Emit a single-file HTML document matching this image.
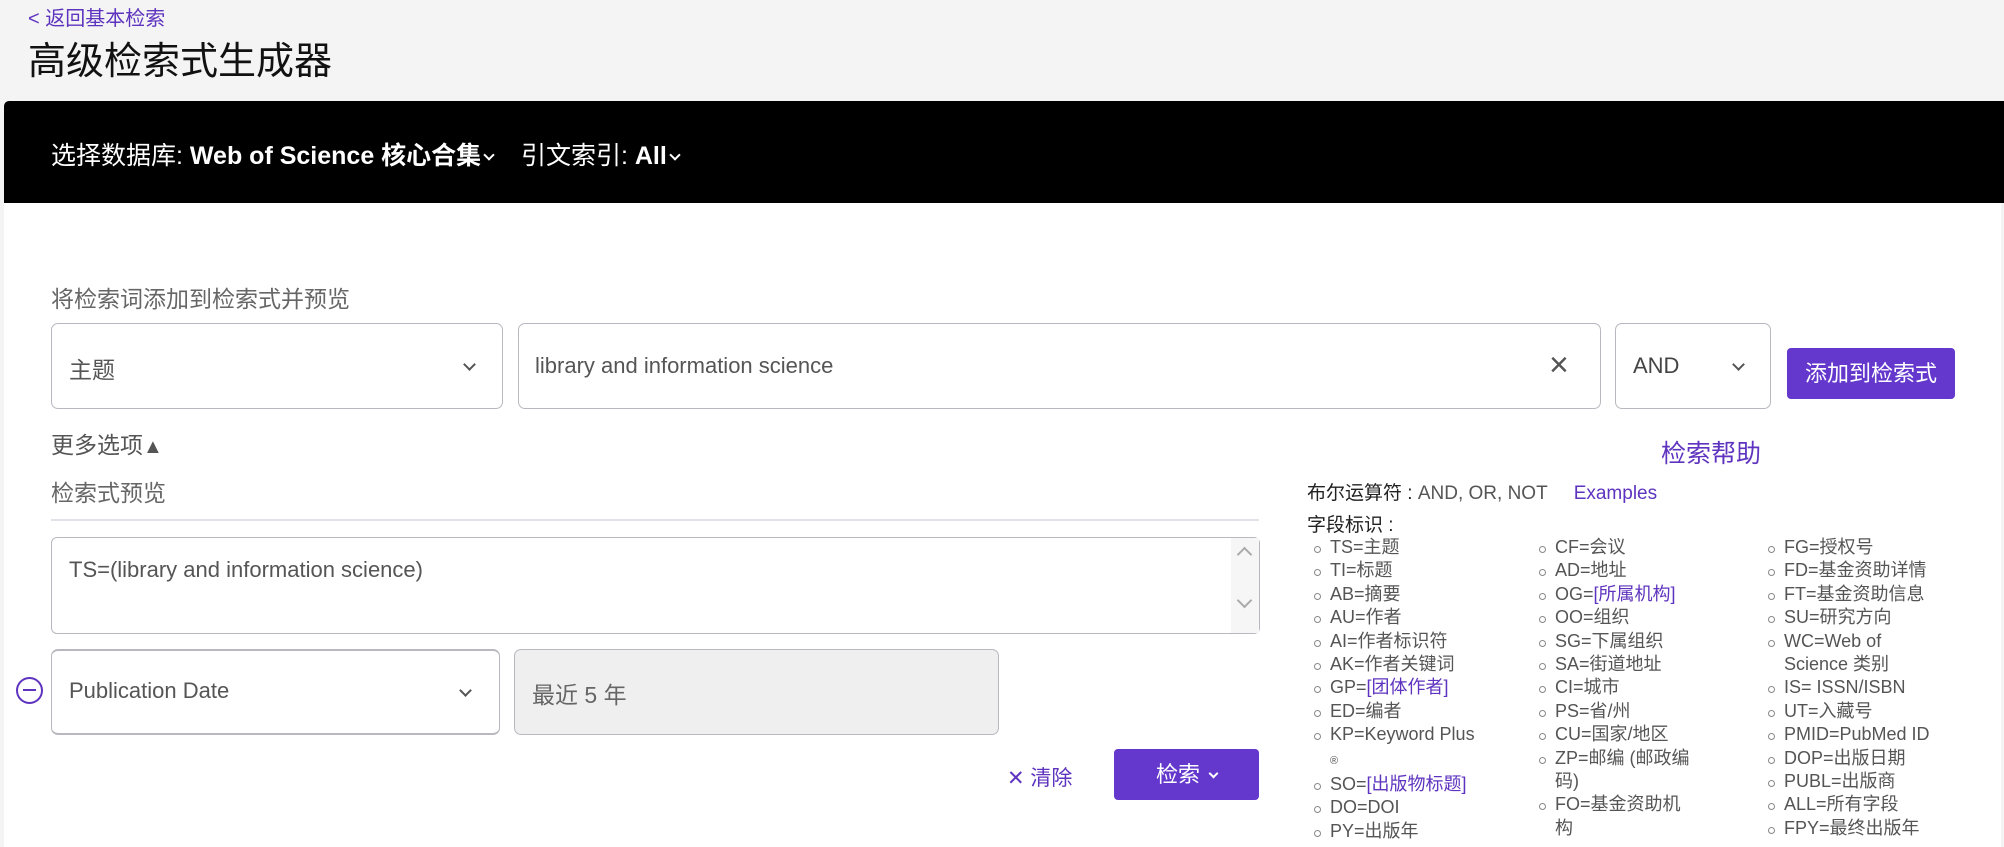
<!DOCTYPE html>
<html><head><meta charset="utf-8"><style>
*{box-sizing:border-box;margin:0;padding:0}
body{width:2004px;height:847px;overflow:hidden;background:#f4f4f4;font-family:"Liberation Sans","Noto Sans CJK SC",sans-serif;color:#333;position:relative}
.a{position:absolute}
.purple{color:#5e33bf}
.box{position:absolute;border:1px solid #b8b8c0;border-radius:7px;background:#fff}
.chev{position:absolute;width:9px;height:9px;border-right:2px solid #555;border-bottom:2px solid #555;transform:rotate(45deg)}
.wchev{display:inline-block;width:8px;height:8px;border-right:2px solid #fff;border-bottom:2px solid #fff;transform:rotate(45deg);vertical-align:5px;margin-left:4px}
ul{list-style:none}
.col{position:absolute;top:536px;font-size:18px;line-height:23.4px;color:#555}
.col li{position:relative}
.col li:before{content:"";position:absolute;left:-16px;top:10px;width:5px;height:5px;border:1px solid #888;border-radius:50%}
</style></head><body>
<div class="a purple" style="left:28px;top:2px;font-size:20px">&lt; 返回基本检索</div>
<div class="a" style="left:28px;top:30px;font-size:38px;color:#111">高级检索式生成器</div>
<div class="a" style="left:4px;top:101px;width:2000px;height:102px;background:#000;border-radius:5px 0 0 0"></div>
<div class="a" style="left:51px;top:136px;font-size:25px;color:#fff;white-space:nowrap">选择数据库: <b>Web of Science 核心合集</b><span class="wchev"></span>&nbsp;&nbsp;&nbsp; 引文索引: <b>All</b><span class="wchev"></span></div>
<div class="a" style="left:4px;top:203px;width:1997px;height:644px;background:#fff"></div>
<div class="a" style="left:51px;top:280px;font-size:23px;color:#666">将检索词添加到检索式并预览</div>
<div class="box" style="left:51px;top:323px;width:452px;height:86px"></div>
<div class="a" style="left:69px;top:351px;font-size:23px;color:#555">主题</div>
<div class="chev" style="left:465px;top:360px"></div>
<div class="box" style="left:518px;top:323px;width:1083px;height:86px"></div>
<div class="a" style="left:535px;top:353px;font-size:22px;color:#555">library and information science</div>
<div class="a" style="left:1549px;top:345px;font-size:34px;color:#555;line-height:40px">×</div>
<div class="box" style="left:1615px;top:323px;width:156px;height:86px"></div>
<div class="a" style="left:1633px;top:353px;font-size:22px;color:#444">AND</div>
<div class="chev" style="left:1734px;top:360px"></div>
<div class="a" style="left:1787px;top:348px;width:168px;height:51px;background:#6438cc;border-radius:4px;color:#fff;font-size:22px;text-align:center;line-height:51px">添加到检索式</div>
<div class="a" style="left:51px;top:426px;font-size:23px;color:#555">更多选项<span style="font-size:20px">▲</span></div>
<div class="a purple" style="left:1661px;top:434px;font-size:25px">检索帮助</div>
<div class="a" style="left:51px;top:474px;font-size:23px;color:#666">检索式预览</div>
<div class="a" style="left:51px;top:519px;width:1208px;height:2px;background:#e2e2e8"></div>
<div class="box" style="left:51px;top:537px;width:1209px;height:97px;border-radius:6px"></div>
<div class="a" style="left:1231px;top:538px;width:28px;height:95px;background:#f6f6f6"></div>
<div class="a" style="left:1239px;top:549px;width:11px;height:11px;border-left:2px solid #aaa;border-top:2px solid #aaa;transform:rotate(45deg)"></div>
<div class="a" style="left:1239px;top:595px;width:11px;height:11px;border-right:2px solid #aaa;border-bottom:2px solid #aaa;transform:rotate(45deg)"></div>
<div class="a" style="left:69px;top:557px;font-size:22px;color:#555">TS=(library and information science)</div>
<div class="a" style="left:16px;top:677px;width:27px;height:27px;border:2px solid #5e33bf;border-radius:50%"></div>
<div class="a" style="left:23px;top:689px;width:13px;height:2px;background:#5e33bf"></div>
<div class="box" style="left:51px;top:649px;width:449px;height:86px;border-width:2px 1px"></div>
<div class="a" style="left:69px;top:678px;font-size:22px;color:#555">Publication Date</div>
<div class="chev" style="left:461px;top:686px"></div>
<div class="box" style="left:514px;top:649px;width:485px;height:86px;background:#efefef"></div>
<div class="a" style="left:532px;top:676px;font-size:23px;color:#666">最近 5 年</div>
<div class="a purple" style="left:1007px;top:762px;font-size:21px">✕ 清除</div>
<div class="a" style="left:1114px;top:749px;width:145px;height:51px;background:#6438cc;border-radius:4px;color:#fff;font-size:22px;text-align:center;line-height:51px">检索<span class="wchev" style="width:7px;height:7px;margin-left:10px"></span></div>
<div class="a" style="left:1307px;top:478px;font-size:19px;color:#222">布尔运算符 : <span style="color:#555">AND, OR, NOT</span><span class="purple" style="margin-left:26px">Examples</span></div>
<div class="a" style="left:1307px;top:510px;font-size:19px;color:#222">字段标识 :</div>
<ul class="col" style="left:1330px;width:180px">
<li>TS=主题</li><li>TI=标题</li><li>AB=摘要</li><li>AU=作者</li><li>AI=作者标识符</li><li>AK=作者关键词</li><li>GP=<span class="purple">[团体作者]</span></li><li>ED=编者</li><li>KP=Keyword Plus<br><span style="font-size:11px">®</span></li><li>SO=<span class="purple">[出版物标题]</span></li><li>DO=DOI</li><li>PY=出版年</li>
</ul>
<ul class="col" style="left:1555px;width:168px">
<li>CF=会议</li><li>AD=地址</li><li>OG=<span class="purple">[所属机构]</span></li><li>OO=组织</li><li>SG=下属组织</li><li>SA=街道地址</li><li>CI=城市</li><li>PS=省/州</li><li>CU=国家/地区</li><li>ZP=邮编 (邮政编<br>码)</li><li>FO=基金资助机<br>构</li>
</ul>
<ul class="col" style="left:1784px;width:215px">
<li>FG=授权号</li><li>FD=基金资助详情</li><li>FT=基金资助信息</li><li>SU=研究方向</li><li>WC=Web of<br>Science 类别</li><li>IS= ISSN/ISBN</li><li>UT=入藏号</li><li>PMID=PubMed ID</li><li>DOP=出版日期</li><li>PUBL=出版商</li><li>ALL=所有字段</li><li>FPY=最终出版年</li>
</ul>
</body></html>
